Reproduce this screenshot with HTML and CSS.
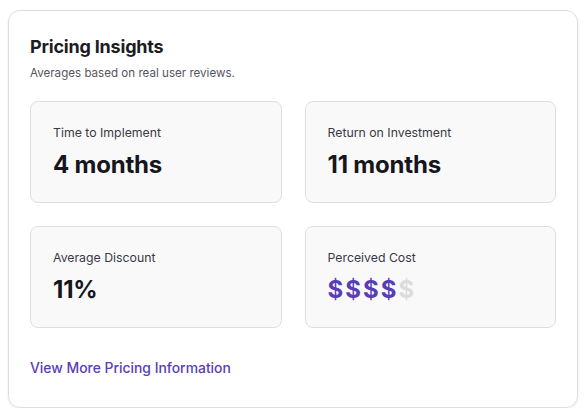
FILE: index.html
```html
<!DOCTYPE html>
<html>
<head>
<meta charset="utf-8">
<link rel="stylesheet" href="styles.css">
</head>
<body>
<section class="panel">
  <h2 class="title">Pricing Insights</h2>
  <p class="subtitle">Averages based on real user reviews.</p>
  <div class="grid">
    <div class="stat">
      <div class="label">Time to Implement</div>
      <div class="value">4 months</div>
    </div>
    <div class="stat">
      <div class="label">Return on Investment</div>
      <div class="value">11 months</div>
    </div>
    <div class="stat">
      <div class="label">Average Discount</div>
      <div class="value">11%</div>
    </div>
    <div class="stat">
      <div class="label">Perceived Cost</div>
      <div class="value cost"><span class="on">$</span><span class="on">$</span><span class="on">$</span><span class="on">$</span><span class="off">$</span></div>
    </div>
  </div>
  <a class="more" href="#">View More Pricing Information</a>
</section>
</body>
</html>
```
FILE: styles.css
```css
html, body { margin: 0; padding: 0; background: #fff; }
body {
  padding: 10px 10px 0 8px;
  font-family: Inter, "Noto Sans", sans-serif;
  color: #1c1c22;
}
.panel {
  width: 570px;
  height: 398px;
  box-sizing: border-box;
  border: 1px solid #dedee2;
  border-radius: 12px;
  box-shadow: 0 1px 3px rgba(0,0,0,0.08);
  padding: 23px 21px 0 21px;
  display: flex;
  flex-direction: column;
}
.title {
  margin: 0;
  font-size: 18px;
  line-height: 26px;
  font-weight: 700;
  letter-spacing: -0.2px;
}
.subtitle {
  margin: 4px 0 0 0;
  font-size: 11.6px;
  line-height: 18px;
  color: #55555e;
}
.grid {
  margin-top: 19px;
  display: grid;
  grid-template-columns: 1fr 1fr;
  gap: 23px;
}
.stat {
  height: 102px;
  box-sizing: border-box;
  background: #f9f9fa;
  border: 1px solid #dedee2;
  border-radius: 8px;
  padding: 22px 22px 0 22px;
}
.label {
  font-size: 12.3px;
  line-height: 18px;
  color: #3a3a44;
}
.value {
  margin-top: 8px;
  font-size: 24px;
  line-height: 30px;
  font-weight: 700;
  color: #16161c;
  letter-spacing: -0.2px;
}
.cost { letter-spacing: 2px; }
.cost .on { color: #5a3db6; }
.cost .off { color: #dcdce0; }
.more {
  margin-top: 30px;
  font-size: 13.9px;
  line-height: 20px;
  font-weight: 500;
  color: #5a3db6;
  text-decoration: none;
  align-self: flex-start;
}
```
